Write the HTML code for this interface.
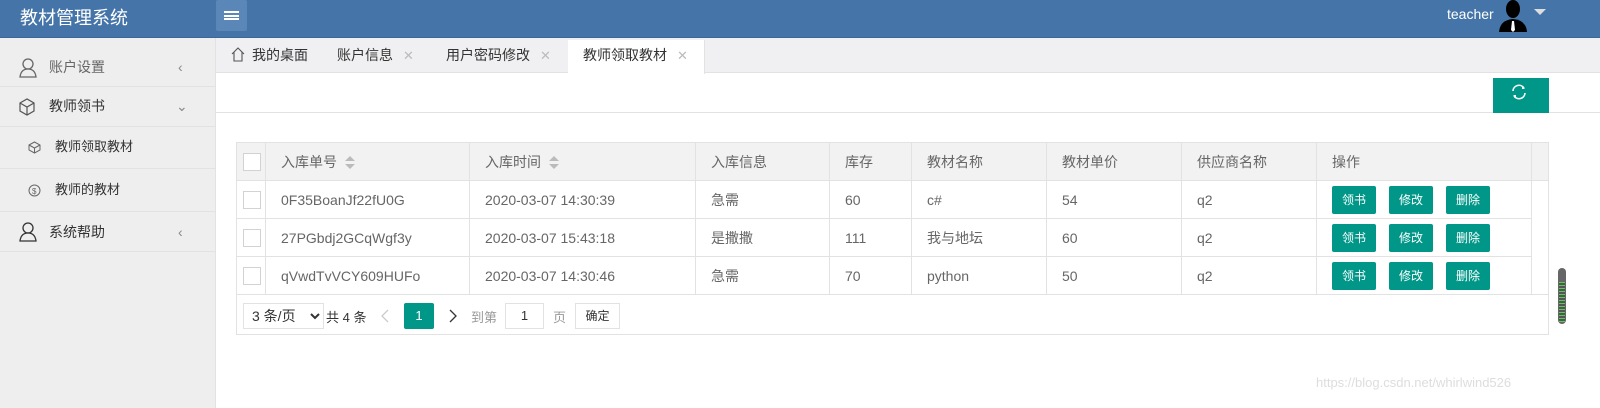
<!DOCTYPE html>
<html><head><meta charset="utf-8"><style>
*{margin:0;padding:0;box-sizing:border-box}
body{width:1600px;height:408px;overflow:hidden;background:#fff;font-family:"Liberation Sans","Noto Sans CJK SC",sans-serif;font-size:14px;color:#333;position:relative}
.a{position:absolute}
.hdr{left:0;top:0;width:1600px;height:38px;background:#4575a8;border-bottom:1px solid #3a6797}
.side{left:0;top:38px;width:216px;height:370px;background:#eeeeee;border-right:1px solid #e2e2e2}
.si{position:absolute;left:0;width:216px;border-bottom:1px solid #e2e2e2;color:#333}
.tabs{left:216px;top:38px;width:1384px;height:35px;background:#f0f0f2;border-bottom:1px solid #e2e2e2}
.tab{position:absolute;top:38px;height:35px;line-height:35px;font-size:14px;color:#333}
.x{color:#bbb;margin-left:10px;font-size:13px}
table{position:absolute;left:236px;top:142px;border-collapse:collapse;font-size:14px;color:#666}
td{border:1px solid #e2e2e2;height:38px;padding-left:15px;white-space:nowrap}
tr.h td{background:#f2f2f2;color:#666}
.cb{display:inline-block;width:18px;height:18px;border:1px solid #d2d2d2;background:#fff;vertical-align:middle}
.btn{display:inline-block;width:44px;height:28px;line-height:28px;background:#009688;color:#fff;text-align:center;font-size:12px;margin-right:13px;border-radius:2px;vertical-align:middle}
.sort{display:inline-block;vertical-align:middle;margin-left:8px;width:10px;height:14px;position:relative}
.sort:before{content:"";position:absolute;left:0;top:0;border:5px solid transparent;border-bottom:5px solid #bbb;border-top:0}
.sort:after{content:"";position:absolute;left:0;top:8px;border:5px solid transparent;border-top:5px solid #bbb;border-bottom:0}
</style></head><body>
<div class="a hdr"></div>
<div class="a" style="left:20px;top:4px;color:#fff;font-size:18px">教材管理系统</div>
<div class="a" style="left:216px;top:0;width:31px;height:31px;background:#5a87b8;border-radius:2px"></div>
<div class="a" style="left:224px;top:11px;width:15px;height:9px;border-top:2px solid #fff;border-bottom:2px solid #fff"></div>
<div class="a" style="left:224px;top:15px;width:15px;height:2px;background:#fff"></div>
<div class="a" style="left:1447px;top:6px;color:#fff;font-size:14px">teacher</div>
<svg class="a" style="left:1497px;top:0" width="32" height="32" viewBox="0 0 32 32"><ellipse cx="16" cy="9" rx="7" ry="9" fill="#000"/><path d="M2 32 Q3 20 16 19 Q29 20 30 32Z" fill="#000"/><path d="M15 21 L17 21 L18 30 L16 32 L14 30Z" fill="#fff"/></svg>
<div class="a" style="left:1534px;top:9px;border:6px solid transparent;border-top:6px solid #ddd"></div>
<div class="a side"></div>
<div class="si" style="top:48px;height:39px;line-height:39px;color:#666"><svg class="a" style="left:19px;top:10px" width="18" height="20"><circle cx="9" cy="6" r="5" fill="none" stroke="#666" stroke-width="1.3"/><path d="M1 19 Q2 11 9 11 Q16 11 17 19Z" fill="none" stroke="#666" stroke-width="1.3"/></svg><span style="position:absolute;left:49px">账户设置</span><span style="position:absolute;left:178px;color:#888">&lsaquo;</span></div>
<div class="si" style="top:87px;height:40px;line-height:38px"><svg class="a" style="left:18px;top:11px" width="18" height="18"><path d="M2 5 L9 1 L16 5 L16 13 L9 17 L2 13Z M2 5 L9 9 L16 5 M9 9 L9 17" fill="none" stroke="#555" stroke-width="1.2"/></svg><span style="position:absolute;left:49px">教师领书</span><span style="position:absolute;left:176px;color:#888">&#8964;</span></div>
<div class="si" style="top:127px;height:42px;line-height:40px;font-size:13px"><svg class="a" style="left:28px;top:14px" width="13" height="13"><path d="M1 4 L6.5 1 L12 4 L12 9 L6.5 12 L1 9Z M1 4 L6.5 7 L12 4 M6.5 7 L6.5 12" fill="none" stroke="#666" stroke-width="1"/></svg><span style="position:absolute;left:55px">教师领取教材</span></div>
<div class="si" style="top:169px;height:43px;line-height:42px;font-size:13px"><svg class="a" style="left:28px;top:15px" width="13" height="13"><circle cx="6.5" cy="6.5" r="5.5" fill="none" stroke="#666"/><text x="4" y="10" font-size="8" fill="#666">$</text></svg><span style="position:absolute;left:55px">教师的教材</span></div>
<div class="si" style="top:212px;height:40px;line-height:40px"><svg class="a" style="left:19px;top:10px" width="18" height="20"><circle cx="9" cy="6" r="5" fill="none" stroke="#333" stroke-width="1.3"/><path d="M1 19 Q2 11 9 11 Q16 11 17 19Z" fill="none" stroke="#333" stroke-width="1.3"/></svg><span style="position:absolute;left:49px">系统帮助</span><span style="position:absolute;left:178px;color:#888">&lsaquo;</span></div>
<div class="a tabs"></div>
<svg class="a" style="left:231px;top:47px" width="14" height="15"><path d="M1 7 L7 1 L13 7 M3 5 L3 14 L11 14 L11 5" fill="none" stroke="#555" stroke-width="1.1"/></svg>
<div class="tab" style="left:252px">我的桌面</div>
<div class="tab" style="left:337px">账户信息<span class="x">✕</span></div>
<div class="tab" style="left:446px">用户密码修改<span class="x">✕</span></div>
<div class="a" style="left:568px;top:40px;width:137px;height:34px;background:#fff;border-right:1px solid #e2e2e2"></div>
<div class="tab" style="left:583px">教师领取教材<span class="x">✕</span></div>
<div class="a" style="left:216px;top:112px;width:1384px;height:1px;background:#e2e2e2"></div>
<div class="a" style="left:1493px;top:78px;width:56px;height:35px;background:#009688"></div>
<svg class="a" style="left:1510px;top:83px" width="18" height="18" viewBox="0 0 18 18"><path d="M3 8 A6 6 0 0 1 14 5 M15 10 A6 6 0 0 1 4 13" fill="none" stroke="#fff" stroke-width="1.6"/><path d="M12 3 L15 6 L12 6Z M6 15 L3 12 L6 12Z" fill="#fff"/></svg>
<div class="a" style="left:236px;top:142px;width:1313px;height:193px;border:1px solid #e2e2e2"></div>
<table>
<tr class="h"><td style="width:29px;padding-left:6px"><span class="cb"></span></td><td style="width:204px">入库单号<span class="sort"></span></td><td style="width:226px">入库时间<span class="sort"></span></td><td style="width:134px">入库信息</td><td style="width:82px">库存</td><td style="width:135px">教材名称</td><td style="width:135px">教材单价</td><td style="width:135px">供应商名称</td><td style="width:215px">操作</td><td style="width:17px"></td></tr>
<tr><td style="padding-left:6px"><span class="cb"></span></td><td>0F35BoanJf22fU0G</td><td>2020-03-07 14:30:39</td><td>急需</td><td>60</td><td>c#</td><td>54</td><td>q2</td><td><span class="btn">领书</span><span class="btn">修改</span><span class="btn">删除</span></td><td style="border-bottom:none;border-top:none"></td></tr>
<tr><td style="padding-left:6px"><span class="cb"></span></td><td>27PGbdj2GCqWgf3y</td><td>2020-03-07 15:43:18</td><td>是撒撒</td><td>111</td><td>我与地坛</td><td>60</td><td>q2</td><td><span class="btn">领书</span><span class="btn">修改</span><span class="btn">删除</span></td><td style="border:none;border-right:1px solid #e2e2e2"></td></tr>
<tr><td style="padding-left:6px"><span class="cb"></span></td><td>qVwdTvVCY609HUFo</td><td>2020-03-07 14:30:46</td><td>急需</td><td>70</td><td>python</td><td>50</td><td>q2</td><td><span class="btn">领书</span><span class="btn">修改</span><span class="btn">删除</span></td><td style="border-top:none"></td></tr>
</table>
<div class="a" style="left:243px;top:303px;width:81px;height:26px;border:1px solid #e2e2e2;font-size:14px;line-height:24px;padding-left:8px;color:#333">3 条/页</div>
<svg class="a" style="left:310px;top:313px" width="10" height="7"><path d="M1 1 L5 5 L9 1" fill="none" stroke="#333" stroke-width="2"/></svg>
<div class="a" style="left:326px;top:307px;font-size:13px;color:#333">共 4 条</div>
<svg class="a" style="left:381px;top:309px" width="8" height="14"><path d="M7 1 L1 7 L7 13" fill="none" stroke="#ccc" stroke-width="1.3"/></svg>
<div class="a" style="left:404px;top:303px;width:30px;height:26px;background:#009688;color:#fff;text-align:center;line-height:26px;font-size:13px;border-radius:2px">1</div>
<svg class="a" style="left:449px;top:309px" width="8" height="14"><path d="M1 1 L7 7 L1 13" fill="none" stroke="#333" stroke-width="1.3"/></svg>
<div class="a" style="left:471px;top:307px;font-size:13px;color:#999">到第</div>
<div class="a" style="left:505px;top:303px;width:39px;height:26px;border:1px solid #e2e2e2;text-align:center;line-height:24px;font-size:13px">1</div>
<div class="a" style="left:553px;top:307px;font-size:13px;color:#999">页</div>
<div class="a" style="left:575px;top:303px;width:45px;height:26px;border:1px solid #e2e2e2;text-align:center;line-height:24px;font-size:12px;color:#333">确定</div>
<div class="a" style="left:1558px;top:268px;width:8px;height:56px;background:#666;border-radius:4px"></div>
<div class="a" style="left:1559px;top:282px;width:6px;height:40px;background:repeating-linear-gradient(#5c5 0 1px,#555 1px 3px)"></div>
<div class="a" style="left:1316px;top:375px;font-size:13px;color:#ddd">https://blog.csdn.net/whirlwind526</div>
</body></html>
